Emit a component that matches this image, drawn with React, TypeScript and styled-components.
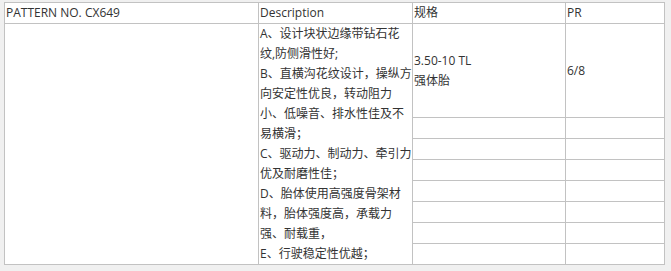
import React from 'react';
import styled, { createGlobalStyle } from 'styled-components';

const GlobalStyle = createGlobalStyle`
  html, body {
    margin: 0;
    padding: 0;
    background: #f0f0f0;
  }
`;

const Page = styled.div`
  padding: 2px 0 0 4px;
`;

const Table = styled.table`
  width: 660px;
  table-layout: fixed;
  border-collapse: collapse;
  background: #fff;
  font-family: "Open Sans", "Noto Sans CJK SC", sans-serif;
  font-size: 12px;
  color: #333;
`;

const Cell = styled.td<{ $h?: number; $top?: boolean }>`
  border: 1px solid #c2c2c2;
  padding: 0 1px;
  height: ${(p) => (p.$h ? `${p.$h - 1}px` : 'auto')};
  line-height: 20px;
  vertical-align: ${(p) => (p.$top ? 'top' : 'middle')};
  overflow: hidden;
`;

const HeadCell = styled(Cell)`
  height: 20px;
`;

const Line = styled.div`
  white-space: nowrap;
`;

// description lines, broken the way the cell wraps them
const description = [
  'A、设计块状边缘带钻石花',
  '纹,防侧滑性好;',
  'B、直横沟花纹设计，操纵方',
  '向安定性优良，转动阻力',
  '小、低噪音、排水性佳及不',
  '易横滑；',
  'C、驱动力、制动力、牵引力',
  '优及耐磨性佳；',
  'D、胎体使用高强度骨架材',
  '料，胎体强度高，承载力',
  '强、耐载重，',
  'E、行驶稳定性优越；',
];

const App: React.FC = () => {
  const blankRows = Array.from({ length: 7 });
  return (
    <>
      <GlobalStyle />
      <Page>
        <Table>
          <colgroup>
            <col style={{ width: 254 }} />
            <col style={{ width: 154 }} />
            <col style={{ width: 153 }} />
            <col style={{ width: 99 }} />
          </colgroup>
          <tbody>
            <tr>
              <HeadCell>PATTERN NO. CX649</HeadCell>
              <HeadCell>Description</HeadCell>
              <HeadCell>规格</HeadCell>
              <HeadCell>PR</HeadCell>
            </tr>
            <tr>
              <Cell rowSpan={8} />
              <Cell rowSpan={8} $top>
                {description.map((d) => (
                  <Line key={d}>{d}</Line>
                ))}
              </Cell>
              <Cell $h={94}>
                <Line>3.50-10 TL</Line>
                <Line>强体胎</Line>
              </Cell>
              <Cell $h={94}>6/8</Cell>
            </tr>
            {blankRows.map((_, i) => (
              <tr key={i}>
                <Cell $h={21} />
                <Cell $h={21} />
              </tr>
            ))}
          </tbody>
        </Table>
      </Page>
    </>
  );
};

export default App;
